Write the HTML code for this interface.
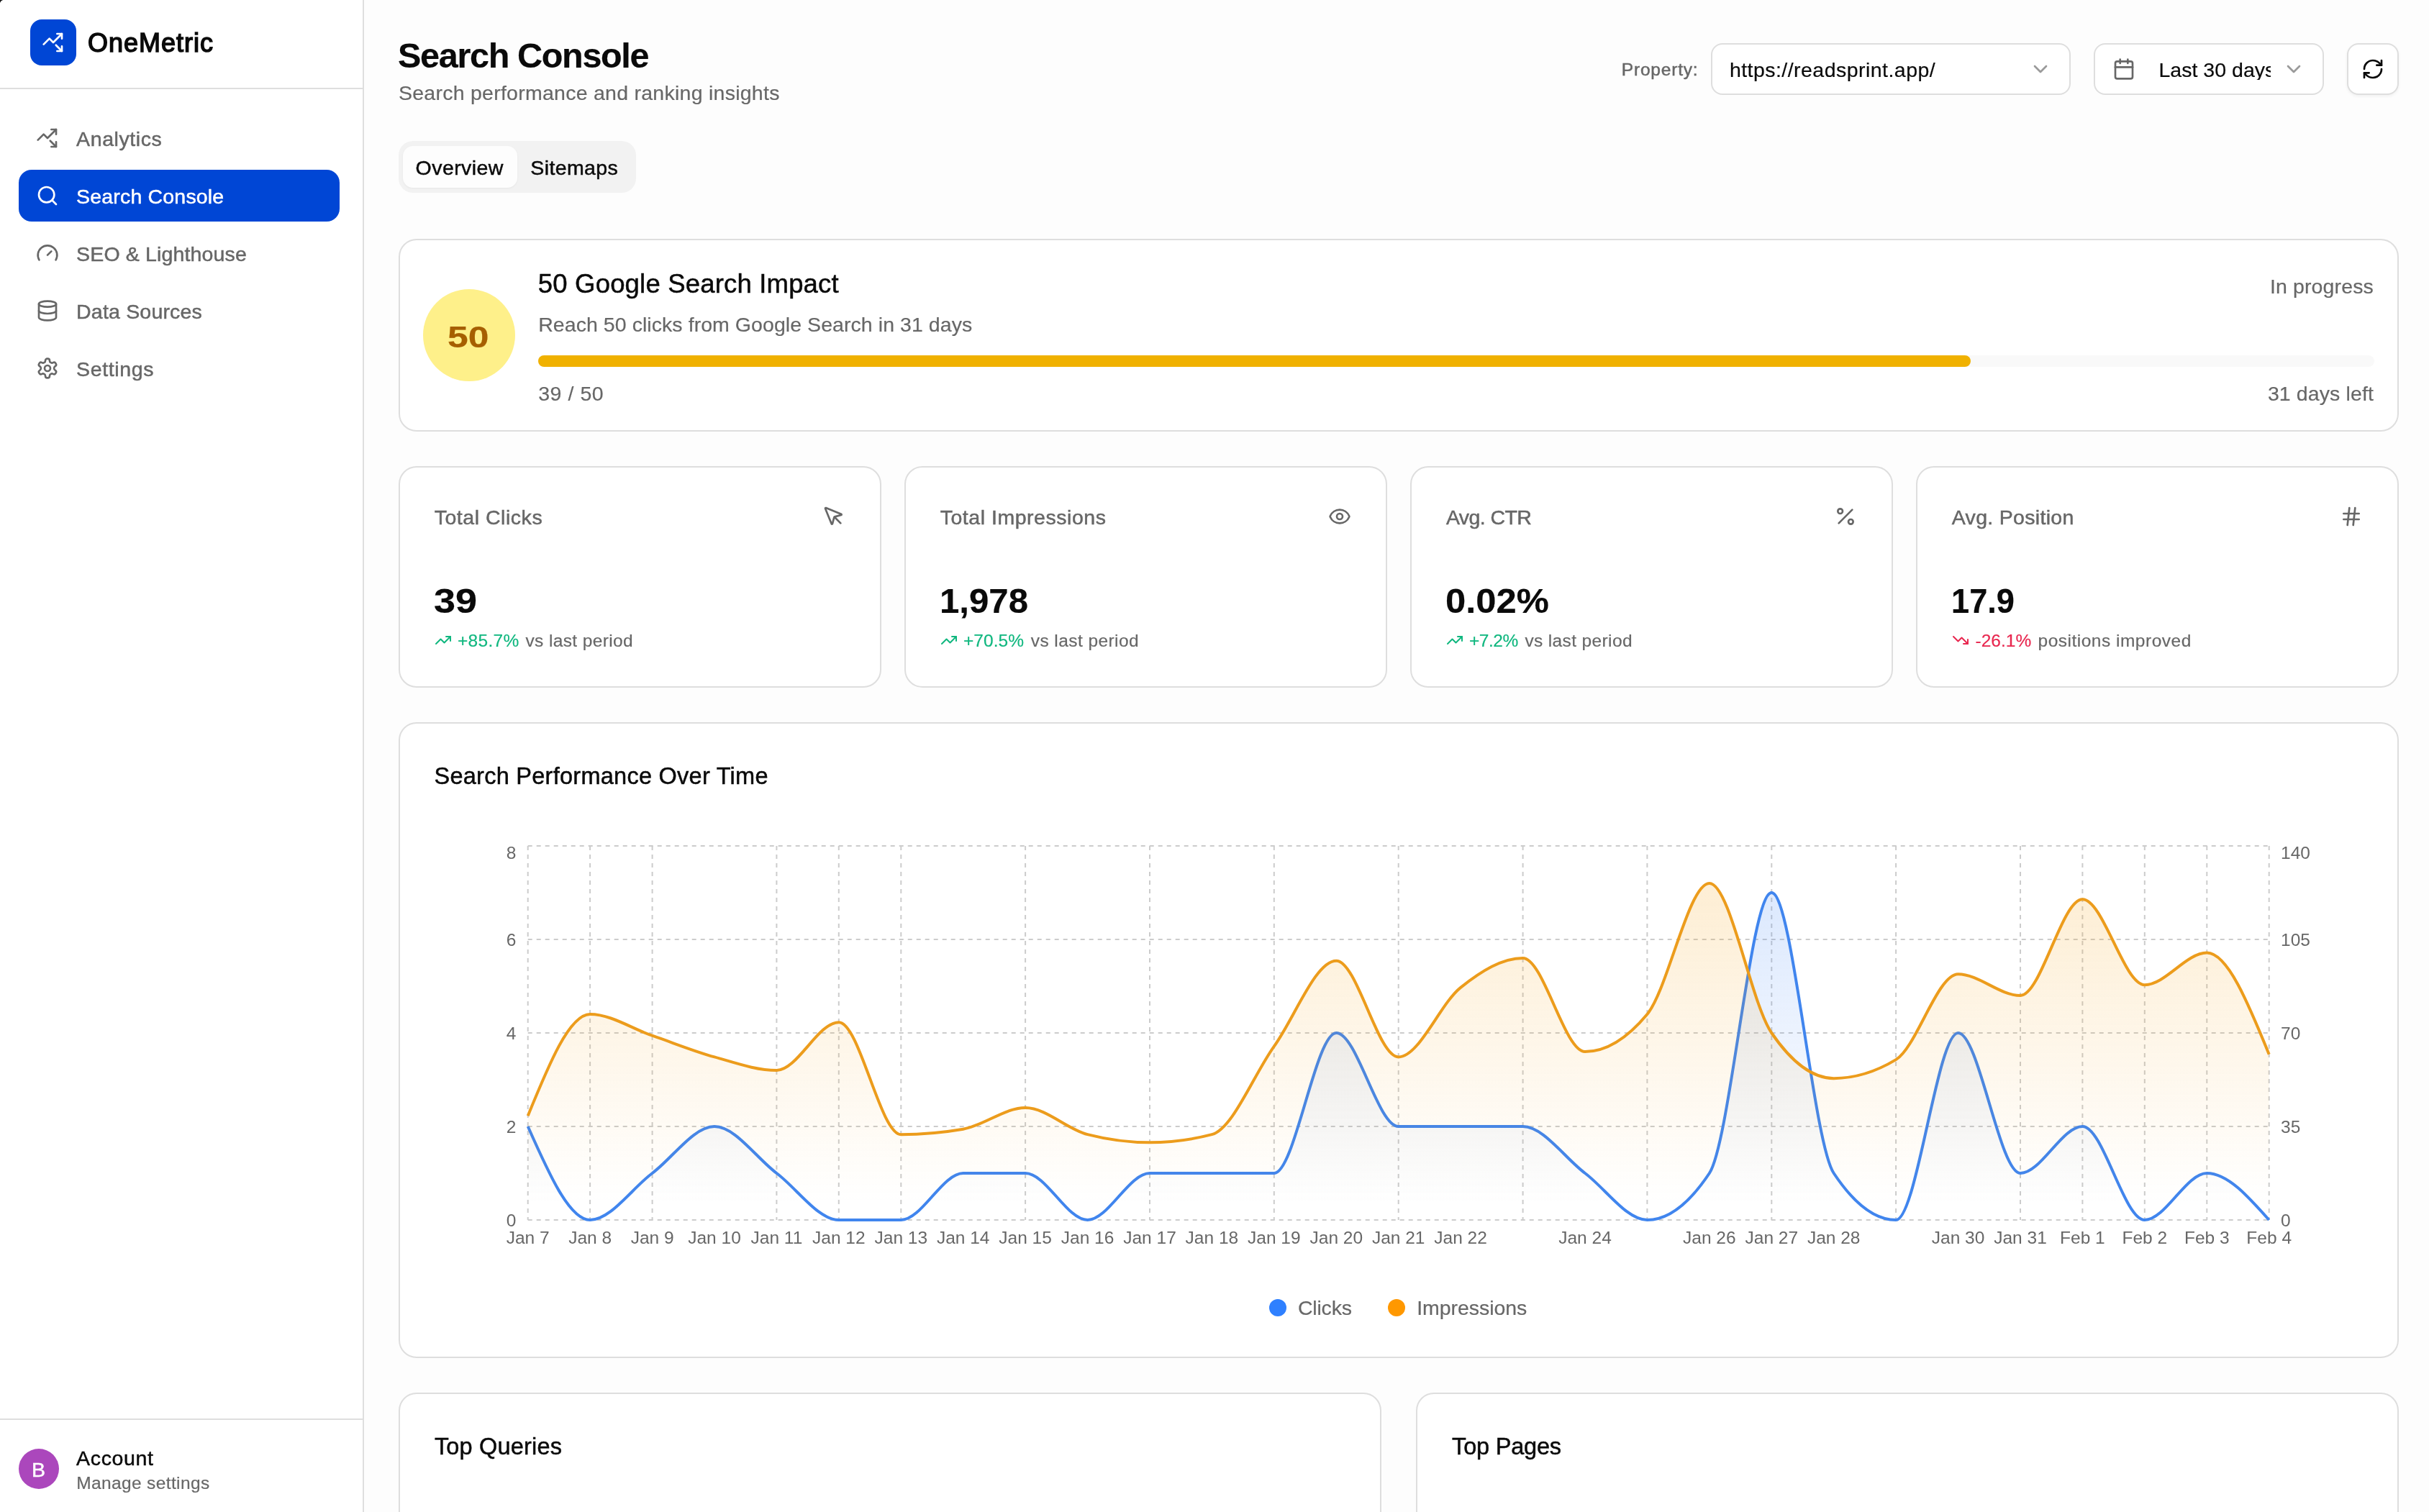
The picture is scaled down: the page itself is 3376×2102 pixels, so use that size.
<!DOCTYPE html><html lang="en"><head><meta charset="utf-8"><title>OneMetric - Search Console</title><style>
html,body{margin:0;padding:0}body{width:3376px;height:2102px;position:relative;overflow:hidden;background:#fdfdfd;font-family:'Liberation Sans', sans-serif;-webkit-font-smoothing:antialiased}.a{position:absolute;box-sizing:border-box}.t{position:absolute;white-space:pre;line-height:1}.ic{position:absolute;overflow:visible}.chart{position:absolute;will-change:transform}.card{position:absolute;box-sizing:border-box;background:#fff;border:2px solid #dedede;border-radius:25px}.t{-webkit-text-stroke:0.2px currentColor}.w5{-webkit-text-stroke:0.5px currentColor}.w6{-webkit-text-stroke:1.5px currentColor}
</style></head><body>
<div class="a" style="left:0;top:0;width:506px;height:2102px;background:#fff;border-right:2px solid #dedede"></div>
<div class="a" style="left:0;top:122px;width:504px;height:2px;background:#dedede"></div>
<div class="a" style="left:0;top:1972px;width:504px;height:2px;background:#dedede"></div>
<svg class="ic" style="left:0;top:0;width:10px;height:10px" viewBox="0 0 10 10"><path d="M0 0H4Q0.8 0.8 0 4Z" fill="#111"/></svg>
<div class="a" style="left:42px;top:27px;width:64px;height:64px;border-radius:16px;background:#0046d5"></div>
<svg class="ic" style="left:58px;top:43px;width:32px;height:32px" viewBox="0 0 24 24" fill="none" stroke="#fff" stroke-width="2" stroke-linecap="round" stroke-linejoin="round"><path d="M14.828 14.828 21 21"/><path d="M21 16v5h-5"/><path d="m21 3-9 9-4-4-6 6"/><path d="M21 8V3h-5"/></svg>
<div class="a" style="left:26px;top:236px;width:446px;height:72px;border-radius:18px;background:#0046d5"></div>
<svg class="ic" style="left:50px;top:176px;width:32px;height:32px" viewBox="0 0 24 24" fill="none" stroke="#676767" stroke-width="2" stroke-linecap="round" stroke-linejoin="round"><path d="M14.828 14.828 21 21"/><path d="M21 16v5h-5"/><path d="m21 3-9 9-4-4-6 6"/><path d="M21 8V3h-5"/></svg>
<svg class="ic" style="left:50px;top:256px;width:32px;height:32px" viewBox="0 0 24 24" fill="none" stroke="#fff" stroke-width="2" stroke-linecap="round" stroke-linejoin="round"><circle cx="11" cy="11" r="8"/><path d="m21 21-4.3-4.3"/></svg>
<svg class="ic" style="left:50px;top:336px;width:32px;height:32px" viewBox="0 0 24 24" fill="none" stroke="#676767" stroke-width="2" stroke-linecap="round" stroke-linejoin="round"><path d="m12 14 4-4"/><path d="M3.34 19a10 10 0 1 1 17.32 0"/></svg>
<svg class="ic" style="left:50px;top:416px;width:32px;height:32px" viewBox="0 0 24 24" fill="none" stroke="#676767" stroke-width="2" stroke-linecap="round" stroke-linejoin="round"><ellipse cx="12" cy="5" rx="9" ry="3"/><path d="M3 5V19A9 3 0 0 0 21 19V5"/><path d="M3 12A9 3 0 0 0 21 12"/></svg>
<svg class="ic" style="left:50px;top:496px;width:32px;height:32px" viewBox="0 0 24 24" fill="none" stroke="#676767" stroke-width="2" stroke-linecap="round" stroke-linejoin="round"><path d="M12.22 2h-.44a2 2 0 0 0-2 2v.18a2 2 0 0 1-1 1.73l-.43.25a2 2 0 0 1-2 0l-.15-.08a2 2 0 0 0-2.73.73l-.22.38a2 2 0 0 0 .73 2.73l.15.1a2 2 0 0 1 1 1.72v.51a2 2 0 0 1-1 1.74l-.15.09a2 2 0 0 0-.73 2.73l.22.38a2 2 0 0 0 2.73.73l.15-.08a2 2 0 0 1 2 0l.43.25a2 2 0 0 1 1 1.73V20a2 2 0 0 0 2 2h.44a2 2 0 0 0 2-2v-.18a2 2 0 0 1 1-1.73l.43-.25a2 2 0 0 1 2 0l.15.08a2 2 0 0 0 2.73-.73l.22-.39a2 2 0 0 0-.73-2.73l-.15-.08a2 2 0 0 1-1-1.74v-.5a2 2 0 0 1 1-1.74l.15-.09a2 2 0 0 0 .73-2.73l-.22-.38a2 2 0 0 0-2.73-.73l-.15.08a2 2 0 0 1-2 0l-.43-.25a2 2 0 0 1-1-1.73V4a2 2 0 0 0-2-2z"/><circle cx="12" cy="12" r="3"/></svg>
<div class="a" style="left:26px;top:2014px;width:56px;height:56px;border-radius:50%;background:#ab47bc"></div>
<div class="a" style="left:554px;top:196px;width:330px;height:72px;border-radius:20px;background:#f2f2f2"></div>
<div class="a" style="left:560px;top:203px;width:159px;height:58px;border-radius:14px;background:#fdfdfd;box-shadow:0 1px 3px rgba(0,0,0,.05)"></div>
<div class="a" style="left:2378px;top:60px;width:500px;height:72px;border-radius:16px;background:#fff;border:2px solid #dedede"></div>
<svg class="ic" style="left:2820px;top:80px;width:32px;height:32px" viewBox="0 0 24 24" fill="none" stroke="#9a9a9a" stroke-width="2" stroke-linecap="round" stroke-linejoin="round"><path d="m6 9 6 6 6-6"/></svg>
<div class="a" style="left:2910px;top:60px;width:320px;height:72px;border-radius:16px;background:#fff;border:2px solid #dedede"></div>
<svg class="ic" style="left:2936px;top:80px;width:32px;height:32px" viewBox="0 0 24 24" fill="none" stroke="#676767" stroke-width="2" stroke-linecap="round" stroke-linejoin="round"><path d="M8 2v4"/><path d="M16 2v4"/><rect width="18" height="18" x="3" y="4" rx="2"/><path d="M3 10h18"/></svg>
<svg class="ic" style="left:3172px;top:80px;width:32px;height:32px" viewBox="0 0 24 24" fill="none" stroke="#9a9a9a" stroke-width="2" stroke-linecap="round" stroke-linejoin="round"><path d="m6 9 6 6 6-6"/></svg>
<div class="a" style="left:3262px;top:60px;width:72px;height:72px;border-radius:16px;background:#fff;border:2px solid #dedede;box-shadow:0 2px 4px rgba(0,0,0,.05)"></div>
<svg class="ic" style="left:3282px;top:80px;width:32px;height:32px" viewBox="0 0 24 24" fill="none" stroke="#0a0a0a" stroke-width="2" stroke-linecap="round" stroke-linejoin="round"><path d="M3 12a9 9 0 0 1 9-9 9.75 9.75 0 0 1 6.74 2.74L21 8"/><path d="M21 3v5h-5"/><path d="M21 12a9 9 0 0 1-9 9 9.75 9.75 0 0 1-6.74-2.74L3 16"/><path d="M8 16H3v5"/></svg>
<div class="card" style="left:554px;top:332px;width:2780px;height:268px"></div>
<div class="a" style="left:588px;top:402px;width:128px;height:128px;border-radius:50%;background:#fef08a"></div>
<div class="a" style="left:748px;top:494px;width:2552px;height:16px;border-radius:8px;background:#f9f9f9"></div>
<div class="a" style="left:748px;top:494px;width:1991px;height:16px;border-radius:8px;background:#f0b100"></div>
<div class="card" style="left:554px;top:648px;width:671px;height:308px"></div>
<svg class="ic" style="left:1143px;top:702px;width:32px;height:32px" viewBox="0 0 24 24" fill="none" stroke="#676767" stroke-width="2" stroke-linecap="round" stroke-linejoin="round"><path d="M12.586 12.586 19 19"/><path d="M3.688 3.037a.497.497 0 0 0-.651.651l6.5 15.999a.501.501 0 0 0 .947-.062l1.569-6.083a2 2 0 0 1 1.448-1.479l6.124-1.579a.5.5 0 0 0 .063-.947z"/></svg>
<svg class="ic" style="left:604px;top:878px;width:24px;height:24px" viewBox="0 0 24 24" fill="none" stroke="#10b77f" stroke-width="2" stroke-linecap="round" stroke-linejoin="round"><path d="M16 7h6v6"/><path d="m22 7-8.5 8.5-5-5L2 17"/></svg>
<div class="card" style="left:1257px;top:648px;width:671px;height:308px"></div>
<svg class="ic" style="left:1846px;top:702px;width:32px;height:32px" viewBox="0 0 24 24" fill="none" stroke="#676767" stroke-width="2" stroke-linecap="round" stroke-linejoin="round"><path d="M2.062 12.348a1 1 0 0 1 0-.696 10.75 10.75 0 0 1 19.876 0 1 1 0 0 1 0 .696 10.75 10.75 0 0 1-19.876 0"/><circle cx="12" cy="12" r="3"/></svg>
<svg class="ic" style="left:1307px;top:878px;width:24px;height:24px" viewBox="0 0 24 24" fill="none" stroke="#10b77f" stroke-width="2" stroke-linecap="round" stroke-linejoin="round"><path d="M16 7h6v6"/><path d="m22 7-8.5 8.5-5-5L2 17"/></svg>
<div class="card" style="left:1960px;top:648px;width:671px;height:308px"></div>
<svg class="ic" style="left:2549px;top:702px;width:32px;height:32px" viewBox="0 0 24 24" fill="none" stroke="#676767" stroke-width="2" stroke-linecap="round" stroke-linejoin="round"><line x1="19" x2="5" y1="5" y2="19"/><circle cx="6.5" cy="6.5" r="2.5"/><circle cx="17.5" cy="17.5" r="2.5"/></svg>
<svg class="ic" style="left:2010px;top:878px;width:24px;height:24px" viewBox="0 0 24 24" fill="none" stroke="#10b77f" stroke-width="2" stroke-linecap="round" stroke-linejoin="round"><path d="M16 7h6v6"/><path d="m22 7-8.5 8.5-5-5L2 17"/></svg>
<div class="card" style="left:2663px;top:648px;width:671px;height:308px"></div>
<svg class="ic" style="left:3252px;top:702px;width:32px;height:32px" viewBox="0 0 24 24" fill="none" stroke="#676767" stroke-width="2" stroke-linecap="round" stroke-linejoin="round"><line x1="4" x2="20" y1="9" y2="9"/><line x1="4" x2="20" y1="15" y2="15"/><line x1="10" x2="8" y1="3" y2="21"/><line x1="16" x2="14" y1="3" y2="21"/></svg>
<svg class="ic" style="left:2713px;top:878px;width:24px;height:24px" viewBox="0 0 24 24" fill="none" stroke="#e8274f" stroke-width="2" stroke-linecap="round" stroke-linejoin="round"><path d="M16 17h6v-6"/><path d="m22 17-8.5-8.5-5 5L2 7"/></svg>
<div class="card" style="left:554px;top:1004px;width:2780px;height:884px"></div>
<svg class="chart" style="left:0;top:0;width:3376px;height:2102px" viewBox="0 0 3376 2102"><defs><linearGradient id="gc" x1="0" y1="0" x2="0" y2="1"><stop offset="5%" stop-color="#3b82f6" stop-opacity="0.17"/><stop offset="95%" stop-color="#3b82f6" stop-opacity="0"/></linearGradient><linearGradient id="gi" x1="0" y1="0" x2="0" y2="1"><stop offset="5%" stop-color="#f59e0b" stop-opacity="0.17"/><stop offset="95%" stop-color="#f59e0b" stop-opacity="0"/></linearGradient></defs><g stroke="#ccc" stroke-width="2" stroke-dasharray="6 6" fill="none"><line x1="733.7" y1="1176.0" x2="3153.7" y2="1176.0"/><line x1="733.7" y1="1306.0" x2="3153.7" y2="1306.0"/><line x1="733.7" y1="1436.0" x2="3153.7" y2="1436.0"/><line x1="733.7" y1="1566.0" x2="3153.7" y2="1566.0"/><line x1="733.7" y1="1696.0" x2="3153.7" y2="1696.0"/><line x1="733.7" y1="1176.0" x2="733.7" y2="1696.0"/><line x1="820.1" y1="1176.0" x2="820.1" y2="1696.0"/><line x1="906.6" y1="1176.0" x2="906.6" y2="1696.0"/><line x1="1079.4" y1="1176.0" x2="1079.4" y2="1696.0"/><line x1="1165.8" y1="1176.0" x2="1165.8" y2="1696.0"/><line x1="1252.3" y1="1176.0" x2="1252.3" y2="1696.0"/><line x1="1425.1" y1="1176.0" x2="1425.1" y2="1696.0"/><line x1="1598.0" y1="1176.0" x2="1598.0" y2="1696.0"/><line x1="1770.8" y1="1176.0" x2="1770.8" y2="1696.0"/><line x1="1943.7" y1="1176.0" x2="1943.7" y2="1696.0"/><line x1="2116.6" y1="1176.0" x2="2116.6" y2="1696.0"/><line x1="2289.4" y1="1176.0" x2="2289.4" y2="1696.0"/><line x1="2462.3" y1="1176.0" x2="2462.3" y2="1696.0"/><line x1="2635.1" y1="1176.0" x2="2635.1" y2="1696.0"/><line x1="2808.0" y1="1176.0" x2="2808.0" y2="1696.0"/><line x1="2894.4" y1="1176.0" x2="2894.4" y2="1696.0"/><line x1="2980.8" y1="1176.0" x2="2980.8" y2="1696.0"/><line x1="3067.3" y1="1176.0" x2="3067.3" y2="1696.0"/><line x1="3153.7" y1="1176.0" x2="3153.7" y2="1696.0"/></g><path d="M733.70,1566.00C762.51,1631.00,791.32,1696.00,820.13,1696.00C848.94,1696.00,877.75,1652.67,906.56,1631.00C935.37,1609.33,964.18,1566.00,992.99,1566.00C1021.80,1566.00,1050.60,1609.33,1079.41,1631.00C1108.22,1652.67,1137.03,1696.00,1165.84,1696.00C1194.65,1696.00,1223.46,1696.00,1252.27,1696.00C1281.08,1696.00,1309.89,1631.00,1338.70,1631.00C1367.51,1631.00,1396.32,1631.00,1425.13,1631.00C1453.94,1631.00,1482.75,1696.00,1511.56,1696.00C1540.37,1696.00,1569.18,1631.00,1597.99,1631.00C1626.80,1631.00,1655.60,1631.00,1684.41,1631.00C1713.22,1631.00,1742.03,1631.00,1770.84,1631.00C1799.65,1631.00,1828.46,1436.00,1857.27,1436.00C1886.08,1436.00,1914.89,1566.00,1943.70,1566.00C1972.51,1566.00,2001.32,1566.00,2030.13,1566.00C2058.94,1566.00,2087.75,1566.00,2116.56,1566.00C2145.37,1566.00,2174.18,1609.33,2202.99,1631.00C2231.80,1652.67,2260.60,1696.00,2289.41,1696.00C2318.22,1696.00,2347.03,1674.33,2375.84,1631.00C2404.65,1587.67,2433.46,1241.00,2462.27,1241.00C2491.08,1241.00,2519.89,1587.67,2548.70,1631.00C2577.51,1674.33,2606.32,1696.00,2635.13,1696.00C2663.94,1696.00,2692.75,1436.00,2721.56,1436.00C2750.37,1436.00,2779.18,1631.00,2807.99,1631.00C2836.80,1631.00,2865.60,1566.00,2894.41,1566.00C2923.22,1566.00,2952.03,1696.00,2980.84,1696.00C3009.65,1696.00,3038.46,1631.00,3067.27,1631.00C3096.08,1631.00,3124.89,1663.50,3153.70,1696.00L3153.70,1696.0L733.70,1696.0Z" fill="url(#gc)"/><path d="M733.70,1566.00C762.51,1631.00,791.32,1696.00,820.13,1696.00C848.94,1696.00,877.75,1652.67,906.56,1631.00C935.37,1609.33,964.18,1566.00,992.99,1566.00C1021.80,1566.00,1050.60,1609.33,1079.41,1631.00C1108.22,1652.67,1137.03,1696.00,1165.84,1696.00C1194.65,1696.00,1223.46,1696.00,1252.27,1696.00C1281.08,1696.00,1309.89,1631.00,1338.70,1631.00C1367.51,1631.00,1396.32,1631.00,1425.13,1631.00C1453.94,1631.00,1482.75,1696.00,1511.56,1696.00C1540.37,1696.00,1569.18,1631.00,1597.99,1631.00C1626.80,1631.00,1655.60,1631.00,1684.41,1631.00C1713.22,1631.00,1742.03,1631.00,1770.84,1631.00C1799.65,1631.00,1828.46,1436.00,1857.27,1436.00C1886.08,1436.00,1914.89,1566.00,1943.70,1566.00C1972.51,1566.00,2001.32,1566.00,2030.13,1566.00C2058.94,1566.00,2087.75,1566.00,2116.56,1566.00C2145.37,1566.00,2174.18,1609.33,2202.99,1631.00C2231.80,1652.67,2260.60,1696.00,2289.41,1696.00C2318.22,1696.00,2347.03,1674.33,2375.84,1631.00C2404.65,1587.67,2433.46,1241.00,2462.27,1241.00C2491.08,1241.00,2519.89,1587.67,2548.70,1631.00C2577.51,1674.33,2606.32,1696.00,2635.13,1696.00C2663.94,1696.00,2692.75,1436.00,2721.56,1436.00C2750.37,1436.00,2779.18,1631.00,2807.99,1631.00C2836.80,1631.00,2865.60,1566.00,2894.41,1566.00C2923.22,1566.00,2952.03,1696.00,2980.84,1696.00C3009.65,1696.00,3038.46,1631.00,3067.27,1631.00C3096.08,1631.00,3124.89,1663.50,3153.70,1696.00" fill="none" stroke="#4085ee" stroke-width="4" stroke-linejoin="round"/><path d="M733.70,1551.14C762.51,1480.57,791.32,1410.00,820.13,1410.00C848.94,1410.00,877.75,1429.81,906.56,1439.71C935.37,1449.62,964.18,1461.38,992.99,1469.43C1021.80,1477.48,1050.60,1488.00,1079.41,1488.00C1108.22,1488.00,1137.03,1421.14,1165.84,1421.14C1194.65,1421.14,1223.46,1577.14,1252.27,1577.14C1281.08,1577.14,1309.89,1574.67,1338.70,1569.71C1367.51,1564.76,1396.32,1540.00,1425.13,1540.00C1453.94,1540.00,1482.75,1569.71,1511.56,1577.14C1540.37,1584.57,1569.18,1588.29,1597.99,1588.29C1626.80,1588.29,1655.60,1584.57,1684.41,1577.14C1713.22,1569.71,1742.03,1494.81,1770.84,1454.57C1799.65,1414.33,1828.46,1335.71,1857.27,1335.71C1886.08,1335.71,1914.89,1469.43,1943.70,1469.43C1972.51,1469.43,2001.32,1395.76,2030.13,1372.86C2058.94,1349.95,2087.75,1332.00,2116.56,1332.00C2145.37,1332.00,2174.18,1462.00,2202.99,1462.00C2231.80,1462.00,2260.60,1444.67,2289.41,1410.00C2318.22,1375.33,2347.03,1228.00,2375.84,1228.00C2404.65,1228.00,2433.46,1393.90,2462.27,1436.00C2491.08,1478.10,2519.89,1499.14,2548.70,1499.14C2577.51,1499.14,2606.32,1490.48,2635.13,1473.14C2663.94,1455.81,2692.75,1354.29,2721.56,1354.29C2750.37,1354.29,2779.18,1384.00,2807.99,1384.00C2836.80,1384.00,2865.60,1250.29,2894.41,1250.29C2923.22,1250.29,2952.03,1369.14,2980.84,1369.14C3009.65,1369.14,3038.46,1324.57,3067.27,1324.57C3096.08,1324.57,3124.89,1395.14,3153.70,1465.71L3153.70,1696.0L733.70,1696.0Z" fill="url(#gi)"/><path d="M733.70,1551.14C762.51,1480.57,791.32,1410.00,820.13,1410.00C848.94,1410.00,877.75,1429.81,906.56,1439.71C935.37,1449.62,964.18,1461.38,992.99,1469.43C1021.80,1477.48,1050.60,1488.00,1079.41,1488.00C1108.22,1488.00,1137.03,1421.14,1165.84,1421.14C1194.65,1421.14,1223.46,1577.14,1252.27,1577.14C1281.08,1577.14,1309.89,1574.67,1338.70,1569.71C1367.51,1564.76,1396.32,1540.00,1425.13,1540.00C1453.94,1540.00,1482.75,1569.71,1511.56,1577.14C1540.37,1584.57,1569.18,1588.29,1597.99,1588.29C1626.80,1588.29,1655.60,1584.57,1684.41,1577.14C1713.22,1569.71,1742.03,1494.81,1770.84,1454.57C1799.65,1414.33,1828.46,1335.71,1857.27,1335.71C1886.08,1335.71,1914.89,1469.43,1943.70,1469.43C1972.51,1469.43,2001.32,1395.76,2030.13,1372.86C2058.94,1349.95,2087.75,1332.00,2116.56,1332.00C2145.37,1332.00,2174.18,1462.00,2202.99,1462.00C2231.80,1462.00,2260.60,1444.67,2289.41,1410.00C2318.22,1375.33,2347.03,1228.00,2375.84,1228.00C2404.65,1228.00,2433.46,1393.90,2462.27,1436.00C2491.08,1478.10,2519.89,1499.14,2548.70,1499.14C2577.51,1499.14,2606.32,1490.48,2635.13,1473.14C2663.94,1455.81,2692.75,1354.29,2721.56,1354.29C2750.37,1354.29,2779.18,1384.00,2807.99,1384.00C2836.80,1384.00,2865.60,1250.29,2894.41,1250.29C2923.22,1250.29,2952.03,1369.14,2980.84,1369.14C3009.65,1369.14,3038.46,1324.57,3067.27,1324.57C3096.08,1324.57,3124.89,1395.14,3153.70,1465.71" fill="none" stroke="#ec9c1c" stroke-width="4" stroke-linejoin="round"/><g font-family="'Liberation Sans', sans-serif" font-size="24.5" fill="#676767"><text x="717.5" y="1193.5" text-anchor="end">8</text><text x="3170" y="1193.5" text-anchor="start">140</text><text x="717.5" y="1315.0" text-anchor="end">6</text><text x="3170" y="1315.0" text-anchor="start">105</text><text x="717.5" y="1445.0" text-anchor="end">4</text><text x="3170" y="1445.0" text-anchor="start">70</text><text x="717.5" y="1575.0" text-anchor="end">2</text><text x="3170" y="1575.0" text-anchor="start">35</text><text x="717.5" y="1705.0" text-anchor="end">0</text><text x="3170" y="1705.0" text-anchor="start">0</text><text x="733.7" y="1728.6" text-anchor="middle">Jan 7</text><text x="820.1" y="1728.6" text-anchor="middle">Jan 8</text><text x="906.6" y="1728.6" text-anchor="middle">Jan 9</text><text x="993.0" y="1728.6" text-anchor="middle">Jan 10</text><text x="1079.4" y="1728.6" text-anchor="middle">Jan 11</text><text x="1165.8" y="1728.6" text-anchor="middle">Jan 12</text><text x="1252.3" y="1728.6" text-anchor="middle">Jan 13</text><text x="1338.7" y="1728.6" text-anchor="middle">Jan 14</text><text x="1425.1" y="1728.6" text-anchor="middle">Jan 15</text><text x="1511.6" y="1728.6" text-anchor="middle">Jan 16</text><text x="1598.0" y="1728.6" text-anchor="middle">Jan 17</text><text x="1684.4" y="1728.6" text-anchor="middle">Jan 18</text><text x="1770.8" y="1728.6" text-anchor="middle">Jan 19</text><text x="1857.3" y="1728.6" text-anchor="middle">Jan 20</text><text x="1943.7" y="1728.6" text-anchor="middle">Jan 21</text><text x="2030.1" y="1728.6" text-anchor="middle">Jan 22</text><text x="2203.0" y="1728.6" text-anchor="middle">Jan 24</text><text x="2375.8" y="1728.6" text-anchor="middle">Jan 26</text><text x="2462.3" y="1728.6" text-anchor="middle">Jan 27</text><text x="2548.7" y="1728.6" text-anchor="middle">Jan 28</text><text x="2721.6" y="1728.6" text-anchor="middle">Jan 30</text><text x="2808.0" y="1728.6" text-anchor="middle">Jan 31</text><text x="2894.4" y="1728.6" text-anchor="middle">Feb 1</text><text x="2980.8" y="1728.6" text-anchor="middle">Feb 2</text><text x="3067.3" y="1728.6" text-anchor="middle">Feb 3</text><text x="3153.7" y="1728.6" text-anchor="middle">Feb 4</text></g><circle cx="1776" cy="1818" r="12" fill="#2f80ff"/><circle cx="1941" cy="1818" r="12" fill="#ff9800"/></svg>
<div class="card" style="left:554px;top:1936px;width:1366px;height:300px"></div>
<div class="card" style="left:1968px;top:1936px;width:1366px;height:300px"></div>
<div id="txt" style="position:absolute;left:0;top:0;width:3376px;height:2102px;will-change:transform">
<div class="t w6" style="left:122.0px;top:42.4px;font-size:36px;letter-spacing:0.99px;color:#0a0a0a">OneMetric</div>
<div class="t w5" style="left:106.1px;top:178.9px;font-size:28.5px;letter-spacing:0.59px;color:#676767">Analytics</div>
<div class="t w5" style="left:106.1px;top:258.9px;font-size:28.5px;letter-spacing:0.18px;color:#ffffff">Search Console</div>
<div class="t w5" style="left:106.1px;top:338.9px;font-size:28.5px;letter-spacing:0.15px;color:#676767">SEO &amp; Lighthouse</div>
<div class="t w5" style="left:106.1px;top:418.9px;font-size:28.5px;letter-spacing:0.19px;color:#676767">Data Sources</div>
<div class="t w5" style="left:106.1px;top:498.9px;font-size:28.5px;letter-spacing:0.64px;color:#676767">Settings</div>
<div class="t w5" style="left:106.1px;top:2012.6px;font-size:28.5px;letter-spacing:0.66px;color:#0a0a0a">Account</div>
<div class="t" style="left:106.2px;top:2050.3px;font-size:24.5px;letter-spacing:0.37px;color:#676767">Manage settings</div>
<div class="t w5" style="left:43.9px;top:2028.9px;font-size:28.5px;letter-spacing:-1.02px;color:#ffffff">B</div>
<div class="t" style="left:553.1px;top:53.1px;font-size:48.5px;letter-spacing:-1.32px;color:#0a0a0a;font-weight:700">Search Console</div>
<div class="t" style="left:553.9px;top:114.6px;font-size:28.5px;letter-spacing:0.26px;color:#676767">Search performance and ranking insights</div>
<div class="t w5" style="left:577.6px;top:218.9px;font-size:28.5px;letter-spacing:0.44px;color:#0a0a0a">Overview</div>
<div class="t w5" style="left:737.3px;top:218.9px;font-size:28.5px;letter-spacing:0.37px;color:#0a0a0a">Sitemaps</div>
<div class="t w5" style="left:2253.8px;top:84.7px;font-size:24.5px;letter-spacing:0.80px;color:#676767">Property:</div>
<div class="t" style="left:2403.9px;top:82.9px;font-size:28.5px;letter-spacing:0.46px;color:#0a0a0a">https://readsprint.app/</div>
<div class="t" style="left:3000.4px;top:82.7px;font-size:28.5px;letter-spacing:0.03px;color:#0a0a0a;width:155.6px;overflow:hidden">Last 30 days</div>
<div class="t" style="left:621.7px;top:447.8px;font-size:42px;transform-origin:0 0;transform:scaleX(1.2286);color:#a65f00;font-weight:700">50</div>
<div class="t w5" style="left:747.8px;top:377.1px;font-size:36.5px;letter-spacing:0.18px;color:#0a0a0a">50 Google Search Impact</div>
<div class="t" style="left:748.2px;top:436.9px;font-size:28.5px;letter-spacing:0.06px;color:#676767">Reach 50 clicks from Google Search in 31 days</div>
<div class="t" style="left:748.2px;top:532.9px;font-size:28.5px;letter-spacing:0.55px;color:#676767">39 / 50</div>
<div class="t" style="left:3154.9px;top:383.9px;font-size:28.5px;letter-spacing:0.14px;color:#676767">In progress</div>
<div class="t" style="left:3151.9px;top:532.9px;font-size:28.5px;letter-spacing:0.11px;color:#676767">31 days left</div>
<div class="t w5" style="left:603.7px;top:705.2px;font-size:28.5px;letter-spacing:0.53px;color:#676767">Total Clicks</div>
<div class="t" style="left:602.9px;top:811.2px;font-size:48.5px;transform-origin:0 0;transform:scaleX(1.1139);color:#0a0a0a;font-weight:700">39</div>
<div class="t" style="left:636.0px;top:878.7px;font-size:24.5px;letter-spacing:0.28px;color:#10b77f">+85.7%</div>
<div class="t" style="left:730.5px;top:878.7px;font-size:24.5px;letter-spacing:0.37px;color:#676767">vs last period</div>
<div class="t w5" style="left:1306.7px;top:705.2px;font-size:28.5px;letter-spacing:0.53px;color:#676767">Total Impressions</div>
<div class="t" style="left:1305.9px;top:811.2px;font-size:48.5px;transform-origin:0 0;transform:scaleX(1.0134);color:#0a0a0a;font-weight:700">1,978</div>
<div class="t" style="left:1339.0px;top:878.7px;font-size:24.5px;letter-spacing:0.04px;color:#10b77f">+70.5%</div>
<div class="t" style="left:1432.8px;top:878.7px;font-size:24.5px;letter-spacing:0.42px;color:#676767">vs last period</div>
<div class="t w5" style="left:2009.9px;top:705.2px;font-size:28.5px;letter-spacing:-0.58px;color:#676767">Avg. CTR</div>
<div class="t" style="left:2009.1px;top:811.2px;font-size:48.5px;transform-origin:0 0;transform:scaleX(1.0470);color:#0a0a0a;font-weight:700">0.02%</div>
<div class="t" style="left:2042.0px;top:878.7px;font-size:24.5px;letter-spacing:-0.48px;color:#10b77f">+7.2%</div>
<div class="t" style="left:2119.4px;top:878.7px;font-size:24.5px;letter-spacing:0.37px;color:#676767">vs last period</div>
<div class="t w5" style="left:2712.8px;top:705.2px;font-size:28.5px;letter-spacing:0.31px;color:#676767">Avg. Position</div>
<div class="t" style="left:2712.1px;top:811.2px;font-size:48.5px;transform-origin:0 0;transform:scaleX(0.9321);color:#0a0a0a;font-weight:700">17.9</div>
<div class="t" style="left:2745.5px;top:878.7px;font-size:24.5px;letter-spacing:0.03px;color:#e8274f">-26.1%</div>
<div class="t" style="left:2832.5px;top:878.7px;font-size:24.5px;letter-spacing:0.50px;color:#676767">positions improved</div>
<div class="t w5" style="left:603.5px;top:1062.5px;font-size:32.5px;letter-spacing:0.26px;color:#0a0a0a">Search Performance Over Time</div>
<div class="t" style="left:1803.9px;top:1804.3px;font-size:28.5px;letter-spacing:-0.18px;color:#676767">Clicks</div>
<div class="t" style="left:1969.2px;top:1804.3px;font-size:28.5px;letter-spacing:-0.05px;color:#676767">Impressions</div>
<div class="t w5" style="left:603.9px;top:1994.5px;font-size:32.5px;letter-spacing:0.19px;color:#0a0a0a">Top Queries</div>
<div class="t w5" style="left:2018.1px;top:1994.5px;font-size:32.5px;letter-spacing:-0.20px;color:#0a0a0a">Top Pages</div>
</div>
<script>(function(){var w=window.innerWidth||3376;if(w&&Math.abs(w-3376)>2){document.body.style.zoom=(w/3376);}})();</script>
</body></html>
